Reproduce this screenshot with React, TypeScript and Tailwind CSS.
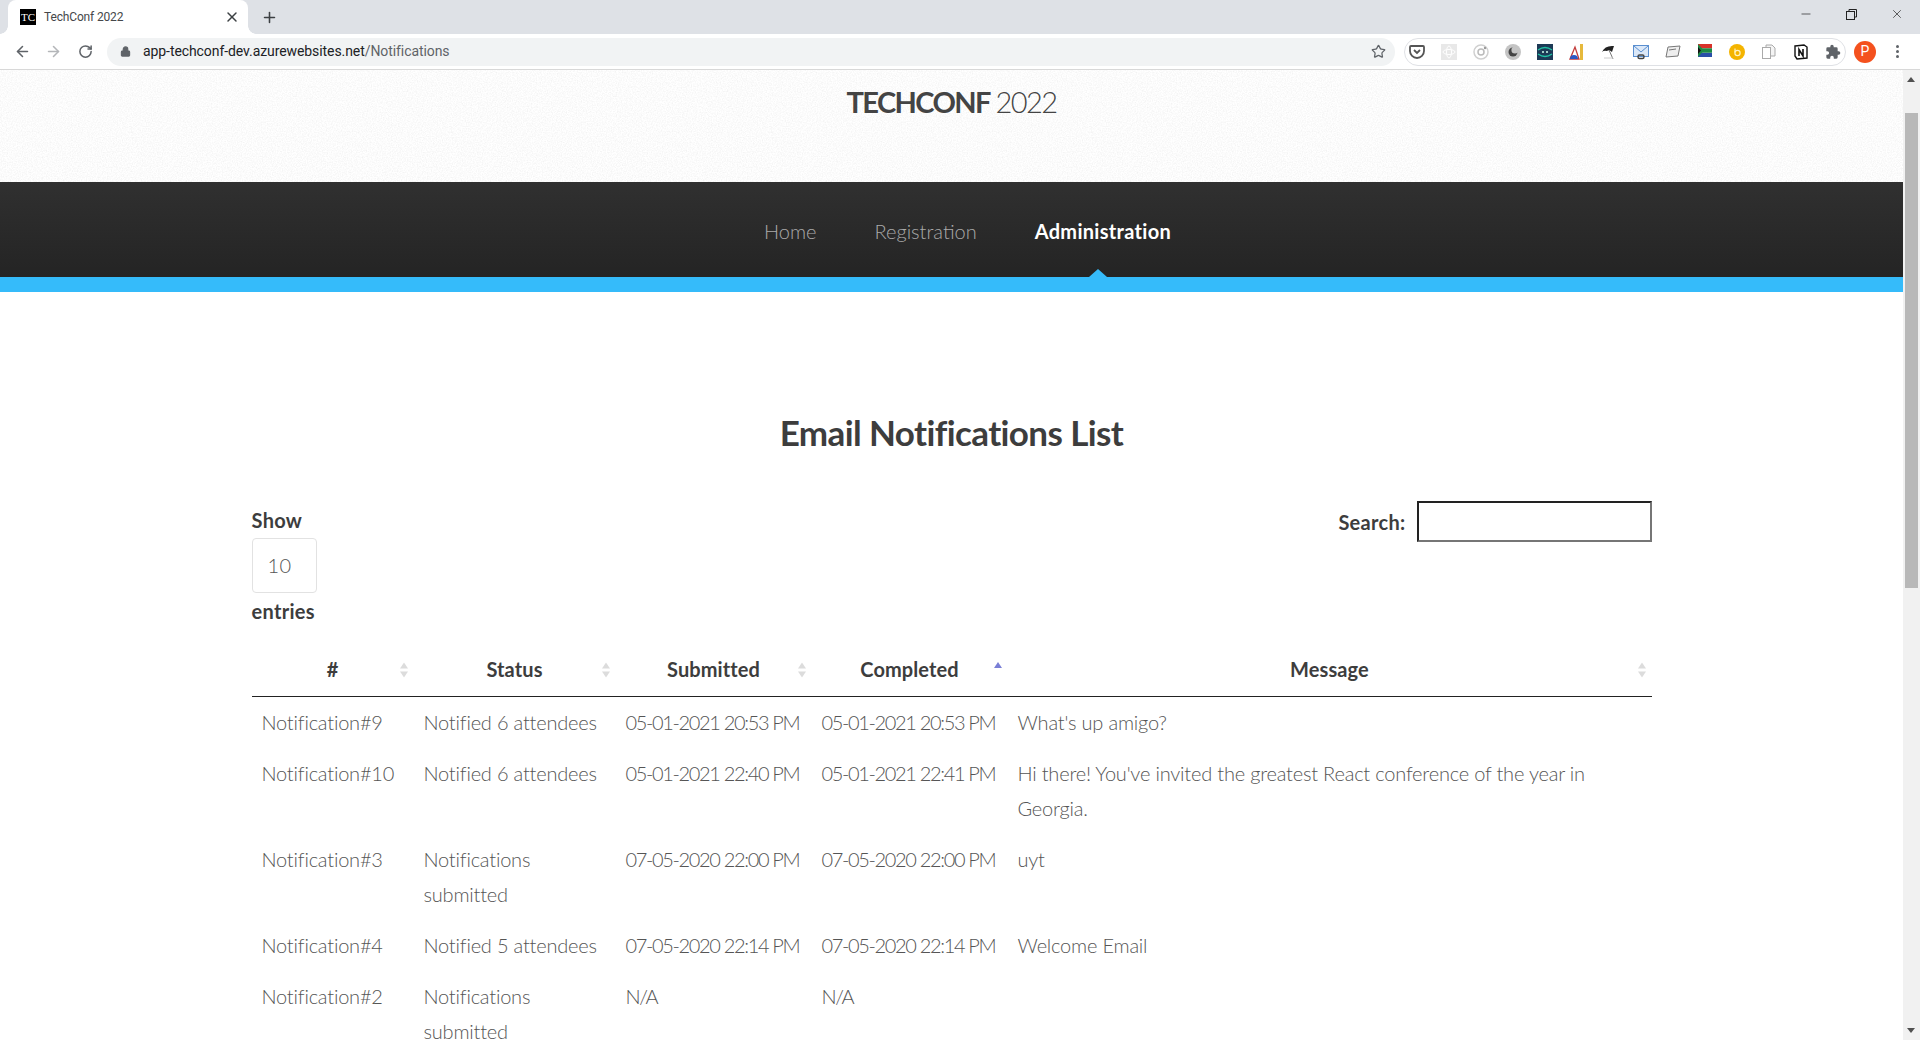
import type { ReactNode } from "react";
import { ArrowLeft, ArrowRight, Lock, Minus, Plus, RotateCw, Star, X } from "lucide-react";

const rows = [
  { id: "Notification#9", status: "Notified 6 attendees", submitted: "05-01-2021 20:53 PM", completed: "05-01-2021 20:53 PM", message: "What's up amigo?" },
  { id: "Notification#10", status: "Notified 6 attendees", submitted: "05-01-2021 22:40 PM", completed: "05-01-2021 22:41 PM", message: "Hi there! You've invited the greatest React conference of the year in Georgia." },
  { id: "Notification#3", status: "Notifications submitted", submitted: "07-05-2020 22:00 PM", completed: "07-05-2020 22:00 PM", message: "uyt" },
  { id: "Notification#4", status: "Notified 5 attendees", submitted: "07-05-2020 22:14 PM", completed: "07-05-2020 22:14 PM", message: "Welcome Email" },
  { id: "Notification#2", status: "Notifications submitted", submitted: "N/A", completed: "N/A", message: "" },
];

const columns = [
  { label: "#", width: "w-[162px]" },
  { label: "Status", width: "w-[202px]" },
  { label: "Submitted", width: "w-[196px]" },
  { label: "Completed", width: "w-[196px]", sorted: true },
  { label: "Message", width: "w-[644px]" },
];

function SortIcon({ sorted }: { sorted?: boolean }) {
  return (
    <svg className="absolute right-[6px] top-[14px]" width="8" height="16" viewBox="0 0 8 16">
      {sorted ? (
        <path d="M0 6 L4 0 L8 6 Z" fill="#7a7fd6" />
      ) : (
        <>
          <path d="M0 6.5 L4 0.5 L8 6.5 Z" fill="#dcdcdc" />
          <path d="M0 9.5 L4 15.5 L8 9.5 Z" fill="#dcdcdc" />
        </>
      )}
    </svg>
  );
}

function Ext({ children }: { children: ReactNode }) {
  return <span className="flex w-[32px] shrink-0 justify-center">{children}</span>;
}

function ExtensionIcons() {
  return (
    <div className="ml-[9px] flex h-[28px] w-[442px] shrink-0 items-center rounded-full border border-[#dfe1e5]">
      <div className="-ml-[4px] flex">
        {/* pocket */}
        <Ext>
          <svg width="16" height="16" viewBox="0 0 16 16" fill="none">
            <path d="M2 2h12a1 1 0 0 1 1 1v4a7 7 0 0 1-14 0V3a1 1 0 0 1 1-1z" stroke="#555" strokeWidth="1.8" />
            <path d="M5 6l3 3 3-3" stroke="#555" strokeWidth="1.8" />
          </svg>
        </Ext>
        {/* atom */}
        <Ext>
          <svg width="16" height="16" viewBox="0 0 16 16" fill="none">
            <rect width="16" height="16" fill="#e8e8e8" />
            <ellipse cx="8" cy="8" rx="6" ry="2.5" stroke="#fff" />
            <ellipse cx="8" cy="8" rx="2.5" ry="6" stroke="#fff" />
          </svg>
        </Ext>
        {/* target */}
        <Ext>
          <svg width="16" height="16" viewBox="0 0 16 16" fill="none">
            <circle cx="8" cy="8" r="7" stroke="#d0d0d0" strokeWidth="1.5" />
            <circle cx="8" cy="8" r="3" stroke="#bbb" strokeWidth="1.5" />
            <circle cx="12" cy="4" r="1.2" fill="#999" />
          </svg>
        </Ext>
        {/* moon */}
        <Ext>
          <svg width="16" height="16" viewBox="0 0 16 16">
            <circle cx="8" cy="8" r="8" fill="#c4c4c4" />
            <circle cx="8" cy="8" r="4.5" fill="#444" />
            <circle cx="10" cy="6" r="3.6" fill="#c4c4c4" />
          </svg>
        </Ext>
        {/* robot */}
        <Ext>
          <svg width="16" height="16" viewBox="0 0 16 16" fill="none">
            <rect width="16" height="16" fill="#1d3a56" />
            <path d="M1 6q7-5 14 0M1 10q7 5 14 0" stroke="#22c3a6" strokeWidth="1.3" />
            <circle cx="6" cy="8" r="1" fill="#cfe" />
            <circle cx="10" cy="8" r="1" fill="#cfe" />
          </svg>
        </Ext>
        {/* ruler */}
        <Ext>
          <svg width="16" height="16" viewBox="0 0 16 16" fill="none">
            <rect x="11" y="0" width="3" height="16" fill="#e6b93c" />
            <path d="M1 15L6 3l4 12z" stroke="#c23a3a" strokeWidth="1.3" />
            <path d="M1 15a4 4 0 0 1 8 0z" fill="#2b57c4" />
          </svg>
        </Ext>
        {/* umbrella */}
        <Ext>
          <svg width="16" height="16" viewBox="0 0 16 16" fill="none">
            <path d="M1 8Q4 1 13 2Q12 5 11 8Q8 5 6 7Q3 6 1 8z" fill="#222" />
            <path d="M8 6l4 9" stroke="#777" />
            <path d="M3 14h9" stroke="#ccc" />
          </svg>
        </Ext>
        {/* mail */}
        <Ext>
          <svg width="16" height="16" viewBox="0 0 16 16" fill="none">
            <rect x="0.5" y="1.5" width="15" height="11" fill="#dbe8f8" stroke="#5a8fd0" />
            <path d="M1 2l7 6 7-6" stroke="#5a8fd0" />
            <rect x="5" y="11" width="6" height="3.5" rx="1.5" stroke="#444" strokeWidth="1.4" />
          </svg>
        </Ext>
        {/* card */}
        <Ext>
          <svg width="16" height="16" viewBox="0 0 16 16" fill="none">
            <path d="M3 3l12-1-2 10-12 1z" fill="#eee" stroke="#777" />
            <path d="M4 6l7-1" stroke="#777" />
          </svg>
        </Ext>
        {/* flag */}
        <Ext>
          <svg width="14" height="13" viewBox="0 0 14 13">
            <rect width="14" height="4.3" fill="#d8312a" />
            <rect y="8.7" width="14" height="4.3" fill="#2a4fa8" />
            <rect y="4.3" width="14" height="4.4" fill="#1e8a45" />
            <path d="M0 0l6 6.5L0 13z" fill="#1e8a45" />
            <path d="M0 3l3 3.5L0 10z" fill="#111" />
          </svg>
        </Ext>
        {/* gold */}
        <Ext>
          <svg width="16" height="16" viewBox="0 0 16 16" fill="none">
            <circle cx="8" cy="8" r="8" fill="#f4b400" />
            <circle cx="8.5" cy="9" r="2.6" stroke="#fff3c4" strokeWidth="1.2" />
            <path d="M6 4.5v4" stroke="#fff3c4" strokeWidth="1.2" />
          </svg>
        </Ext>
        {/* copy */}
        <Ext>
          <svg width="16" height="16" viewBox="0 0 16 16" fill="none">
            <path d="M5 3.5V1h6l3 3v8h-4" fill="#f4f4f4" stroke="#aaa" />
            <rect x="1.5" y="3.5" width="8" height="11" fill="#fff" stroke="#aaa" />
          </svg>
        </Ext>
        {/* notion */}
        <Ext>
          <svg width="16" height="16" viewBox="0 0 16 16" fill="none">
            <path d="M2 2l9-1 3 2v11l-10 1-2-3z" fill="#fff" stroke="#111" strokeWidth="1.4" />
            <path d="M6 12V5.5l4 6.5V5" stroke="#111" strokeWidth="1.6" />
          </svg>
        </Ext>
        {/* puzzle */}
        <Ext>
          <svg width="16" height="16" viewBox="0 0 24 24" fill="#5f6368">
            <path d="M20.5 11H19V7a2 2 0 0 0-2-2h-4V3.5a2.5 2.5 0 0 0-5 0V5H4a2 2 0 0 0-2 2v3.8h1.5a2.7 2.7 0 0 1 0 5.4H2V20a2 2 0 0 0 2 2h3.8v-1.5a2.7 2.7 0 0 1 5.4 0V22H17a2 2 0 0 0 2-2v-4h1.5a2.5 2.5 0 0 0 0-5z" />
          </svg>
        </Ext>
      </div>
    </div>
  );
}

function BrowserChrome() {
  return (
    <div className="shrink-0 font-['Roboto',sans-serif]">
      <div className="flex h-[34px] items-end bg-[#dee1e6]">
        <div className="relative ml-[8px] flex h-[34px] w-[240px] items-center rounded-t-[8px] bg-white pl-[12px]">
          <span className="absolute bottom-0 left-[-8px] h-[8px] w-[8px] bg-[radial-gradient(circle_at_0_0,#dee1e6_7.5px,#fff_8px)]" />
          <span className="absolute bottom-0 right-[-8px] h-[8px] w-[8px] bg-[radial-gradient(circle_at_100%_0,#dee1e6_7.5px,#fff_8px)]" />
          <span className="flex h-[16px] w-[16px] items-center justify-center bg-black font-['Liberation_Serif',serif] text-[11px] leading-none text-white">
            TC
          </span>
          <span className="ml-[8px] text-[12px] tracking-[-0.15px] text-[#45474a]">TechConf 2022</span>
          <X className="absolute left-[216px] top-[9px] text-[#3c4043]" size={16} strokeWidth={2.2} />
        </div>
        <Plus className="mb-[8px] ml-[13px] text-[#3c4043]" size={17} strokeWidth={2.2} />
        <div className="ml-auto flex h-full items-start pt-[7px]">
          <Minus className="mr-[33px]" size={14} strokeWidth={1.2} color="#222" />
          <svg className="mr-[33px] mt-[2px]" width="11" height="11" viewBox="0 0 11 11" fill="none" stroke="#222">
            <rect x="0.5" y="2.5" width="8" height="8" fill="#dee1e6" />
            <path d="M3 2.5V0.5h7.5V8H8.5" />
          </svg>
          <X className="mr-[16px]" size={14} strokeWidth={1.2} color="#222" />
        </div>
      </div>
      <div className="flex h-[36px] items-center border-b border-[#d8d8d8] bg-white">
        <ArrowLeft className="ml-[14px] text-[#5f6368]" size={17} strokeWidth={2.2} />
        <ArrowRight className="ml-[14px] text-[#b4b6b9]" size={17} strokeWidth={2.2} />
        <RotateCw className="ml-[16px] text-[#5f6368]" size={15} strokeWidth={2.4} />
        <div className="ml-[14px] flex h-[28px] w-[1288px] shrink-0 items-center rounded-full bg-[#f1f3f4] pl-[13px] pr-[9px]">
          <Lock className="fill-[#5f6368] text-[#5f6368]" size={11} strokeWidth={2.4} />
          <span className="ml-[12px] text-[14px] tracking-[-0.08px] text-[#202124]">
            app-techconf-dev.azurewebsites.net<span className="text-[#5f6368]">/Notifications</span>
          </span>
          <Star className="ml-auto text-[#5f6368]" size={15} strokeWidth={2} />
        </div>
        <ExtensionIcons />
        <span className="ml-[8px] flex h-[22px] w-[22px] shrink-0 items-center justify-center rounded-full bg-[#f4511e] text-[14px] text-white">
          P
        </span>
        <span className="ml-[20px] flex flex-col gap-[2px]">
          <span className="h-[3px] w-[3px] rounded-full bg-[#5f6368]" />
          <span className="h-[3px] w-[3px] rounded-full bg-[#5f6368]" />
          <span className="h-[3px] w-[3px] rounded-full bg-[#5f6368]" />
        </span>
      </div>
    </div>
  );
}

export default function App() {
  return (
    <div className="flex h-[1040px] flex-col overflow-hidden bg-white font-['Lato',sans-serif]">
      <BrowserChrome />
      <div className="flex min-h-0 flex-1">
        <div className="min-w-0 flex-1 overflow-hidden">
          <header className="relative h-[112px] bg-white pt-[12px] text-center text-[29px] leading-[40px] tracking-[-1.6px] text-[#444]">
            {/* paper texture of the site's header */}
            <svg className="absolute inset-0 h-full w-full" aria-hidden="true">
              <filter id="paper">
                <feTurbulence type="fractalNoise" baseFrequency="0.8" numOctaves="2" />
                <feColorMatrix values="0 0 0 0 0.8  0 0 0 0 0.8  0 0 0 0 0.8  0 0 0 1 -0.35" />
              </filter>
              <rect width="100%" height="100%" filter="url(#paper)" />
            </svg>
            <span className="relative">
              <span className="font-bold">TECHCONF</span> <span className="font-light">2022</span>
            </span>
          </header>

          <nav className="flex h-[95px] justify-center bg-gradient-to-b from-[#303030] to-[#242424] pl-[32px] pt-[31px] text-[20px] leading-[36px]">
            <div className="flex w-[407px] justify-between">
              <a className="font-light text-[#aaaaaa]">Home</a>
              <a className="font-light text-[#aaaaaa]">Registration</a>
              <a className="relative font-bold tracking-[0.3px] text-white">
                Administration
                <span className="absolute bottom-0 left-[54px] h-0 w-0 border-x-[9px] border-b-[8px] border-x-transparent border-b-[#35bbfa]" />
              </a>
            </div>
          </nav>
          <div className="h-[15px] bg-[#35bbfa]" />

          <main className="mx-auto w-[1400px]">
            <h1 className="mt-[116px] text-center text-[35px] font-bold leading-[48px] tracking-[-0.6px] text-[#3d3d3d]">
              Email Notifications List
            </h1>

            <div className="mt-[47px] flex items-start justify-between">
              <div className="text-[20px] font-bold leading-[35px] tracking-[0.3px] text-[#3d3d3d]">
                <div>Show</div>
                <div className="flex h-[55px] w-[65px] items-center rounded-[4px] border border-[#e2e2e2] pl-[15px] font-light text-[#555]">
                  10
                </div>
                <div className="mt-[1px]">entries</div>
              </div>
              <div className="-mt-[2px] flex items-center text-[20px] font-bold tracking-[0.3px] text-[#3d3d3d]">
                Search:
                <input className="ml-[11px] h-[41px] w-[235px] border-2 border-b-[#767676] border-l-[#222] border-r-[#767676] border-t-[#222] bg-white" />
              </div>
            </div>

            <table className="mt-[19px] w-[1400px] table-fixed border-collapse text-[20px] leading-[35px] text-[#555]">
              <thead>
                <tr className="border-b border-[#222]">
                  {columns.map((col) => (
                    <th key={col.label} className={`relative h-[48px] pb-[4px] text-center font-bold tracking-[0.1px] text-[#3d3d3d] ${col.width}`}>
                      {col.label}
                      <SortIcon sorted={col.sorted} />
                    </th>
                  ))}
                </tr>
              </thead>
              <tbody>
                {rows.map((row) => (
                  <tr key={row.id} className="align-top font-light tracking-[-0.2px]">
                    <td className="px-[10px] py-[8px]">{row.id}</td>
                    <td className="px-[10px] py-[8px]">{row.status}</td>
                    <td className="whitespace-nowrap px-[10px] py-[8px] tracking-[-1.35px]">{row.submitted}</td>
                    <td className="whitespace-nowrap px-[10px] py-[8px] tracking-[-1.35px]">{row.completed}</td>
                    <td className="px-[10px] py-[8px]">{row.message}</td>
                  </tr>
                ))}
              </tbody>
            </table>
          </main>
        </div>

        <div className="relative w-[17px] shrink-0 bg-[#f1f1f1]">
          <span className="absolute left-[4px] top-[7px] h-0 w-0 border-x-[4px] border-b-[5px] border-x-transparent border-b-[#505050]" />
          <div className="mx-[2px] mt-[43px] h-[475px] bg-[#b8b8b8]" />
          <span className="absolute bottom-[7px] left-[4px] h-0 w-0 border-x-[4px] border-t-[5px] border-x-transparent border-t-[#505050]" />
        </div>
      </div>
    </div>
  );
}
